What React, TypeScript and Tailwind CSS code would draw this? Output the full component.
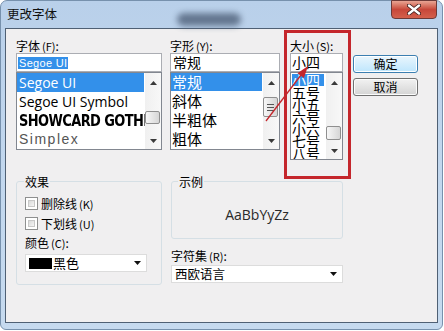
import React from "react";

function UpTri() {
  return (
    <svg width="7" height="4" viewBox="0 0 7 4">
      <polygon points="0,4 7,4 3.5,0" fill="#3a3a3a" />
    </svg>
  );
}
function DownTri() {
  return (
    <svg width="7" height="4" viewBox="0 0 7 4">
      <polygon points="0,0 7,0 3.5,4" fill="#3a3a3a" />
    </svg>
  );
}

function ScrollBar({ thumbTop, thumbH, grip }: { thumbTop: number; thumbH: number; grip?: boolean }) {
  return (
    <div className="w-[16px] h-full bg-gradient-to-r from-[#f0f0f0] to-[#f8f8f8] flex flex-col">
      <div className="h-[16px] flex items-center justify-center pt-[3px]">
        <UpTri />
      </div>
      <div className="flex-1 relative">
        <div
          className="absolute left-[0px] right-[1px] rounded-[2px] border border-[#8f8f8f] bg-gradient-to-r from-[#f7f7f7] to-[#d6d6d6] flex flex-col items-center justify-center gap-[2px]"
          style={{ top: thumbTop, height: thumbH }}
        >
          {grip && (
            <>
              <div className="w-[7px] h-[1px] bg-[#555]" />
              <div className="w-[7px] h-[1px] bg-[#555]" />
              <div className="w-[7px] h-[1px] bg-[#555]" />
            </>
          )}
        </div>
      </div>
      <div className="h-[16px] flex items-center justify-center">
        <DownTri />
      </div>
    </div>
  );
}

function Checkbox() {
  return (
    <div className="w-[13px] h-[13px] border border-[#8e8f8f] bg-white p-[2px]">
      <div className="w-full h-full bg-gradient-to-br from-[#d9d9d9] to-[#f5f5f5] border border-[#c8c8c8]" />
    </div>
  );
}

function ComboArrow() {
  return (
    <svg width="7" height="4" viewBox="0 0 7 4">
      <polygon points="0,0 7,0 3.5,4" fill="#111" />
    </svg>
  );
}

function Label({ main, key2 }: { main: string; key2: string }) {
  return (
    <span className="leading-[13px] whitespace-nowrap">
      {main}
      <span className="ml-[2px] text-[11px]">({key2})</span>
    </span>
  );
}

export default function App() {
  return (
    <div className="w-[444px] h-[331px] bg-white relative overflow-hidden font-['Noto_Sans_CJK_SC',sans-serif] text-[12px] text-black">
      <div className="w-[443px] h-[330px] rounded-t-[7px] rounded-b-[6px] border border-[#7791ad] bg-gradient-to-b from-[#b9d0ea] via-[#c2d7ee] to-[#c6daef] flex flex-col relative">
        {/* title bar */}
        <div className="h-[27px] flex items-start relative">
          <div className="pl-[6px] pt-[6px] text-[12.5px] leading-[14px] text-[#111]">更改字体</div>
          <div className="absolute left-[176px] top-[12px] w-[64px] h-[13px] rounded-full bg-[#4e6079] opacity-80 blur-[3px]" />
          <div className="ml-auto mr-[5px] -mt-[1px] w-[46px] h-[19px] rounded-b-[4px] border border-[#6d3a38] bg-gradient-to-b from-[#e8a493] via-[#c7473a] to-[#d4604c] flex items-center justify-center">
            <svg width="14" height="11" viewBox="0 0 14 11">
              <path d="M2 1.5 L12 9.5 M12 1.5 L2 9.5" stroke="#3a1a18" strokeWidth="4" strokeLinecap="round" />
              <path d="M2 1.5 L12 9.5 M12 1.5 L2 9.5" stroke="#ffffff" strokeWidth="2.4" strokeLinecap="round" />
            </svg>
          </div>
        </div>

        {/* client area */}
        <div className="mx-[4px] h-[295px] border border-[#4f6074] bg-[#f0eff0] pl-[10px] pt-[10px] flex flex-col">
          {/* top row */}
          <div className="flex items-start">
            {/* font */}
            <div className="w-[146px] flex flex-col">
              <div className="h-[14px] leading-[13px]"><Label main="字体" key2="F" />:</div>
              <div className="h-[19px] border border-[#abadb3] bg-white flex items-center pl-[1px]">
                <span className="bg-[#3390ea] text-white font-['Liberation_Sans',sans-serif] text-[11px] leading-[12px] px-[1px] tracking-[0.3px]">Segoe UI</span>
              </div>
              <div className="h-[78px] border border-[#828790] bg-white flex">
                <div className="flex-1 pr-[1px] overflow-hidden">
                  <div className="h-[19px] bg-[#3390ea] text-white font-['Open_Sans',sans-serif] text-[14px] leading-[19px] pl-[2px]">Segoe UI</div>
                  <div className="h-[19px] font-['Open_Sans',sans-serif] text-[14px] leading-[19px] pl-[2px] whitespace-nowrap">Segoe UI Symbol</div>
                  <div className="h-[19px] font-['DejaVu_Sans',sans-serif] font-black text-[13px] leading-[19px] pl-[2px] whitespace-nowrap tracking-[-0.6px] [transform:scaleY(1.15)]">SHOWCARD GOTHIC</div>
                  <div className="h-[19px] font-['Liberation_Sans',sans-serif] font-light text-[#555] text-[14px] leading-[19px] pl-[2px] tracking-[1.5px]">Simplex</div>
                </div>
                <ScrollBar thumbTop={22} thumbH={13} />
              </div>
            </div>

            {/* style */}
            <div className="w-[110px] ml-[8px] flex flex-col">
              <div className="h-[14px] leading-[13px]"><Label main="字形" key2="Y" />:</div>
              <div className="h-[19px] border border-[#abadb3] bg-white text-[14px] leading-[17px] pl-[2px]">常规</div>
              <div className="h-[78px] border border-[#828790] bg-white flex">
                <div className="flex-1 pr-[1px] overflow-hidden text-[15px]">
                  <div className="h-[18px] bg-[#3390ea] text-white leading-[18px] pl-[1px]">常规</div>
                  <div className="h-[19px] leading-[19px] pl-[1px]">斜体</div>
                  <div className="h-[19px] leading-[19px] pl-[1px]">半粗体</div>
                  <div className="h-[19px] leading-[19px] pl-[1px]">粗体</div>
                </div>
                <ScrollBar thumbTop={8} thumbH={20} grip />
              </div>
            </div>

            {/* size */}
            <div className="w-[53px] ml-[10px] flex flex-col">
              <div className="h-[14px] leading-[13px]"><Label main="大小" key2="S" />:</div>
              <div className="h-[19px] border border-[#abadb3] bg-white text-[14px] leading-[17px] pl-[1px]">小四</div>
              <div className="h-[88px] border border-[#828790] bg-white flex">
                <div className="flex-1 overflow-hidden text-[14px] pt-[1px]">
                  <div className="h-[12px] leading-[12px] pl-[1px]">
                    <span className="bg-[#3390ea] text-white inline-block w-[32px] leading-[12px]">小四</span>
                  </div>
                  <div className="h-[12.3px] leading-[12.3px] pl-[1px]">五号</div>
                  <div className="h-[12.3px] leading-[12.3px] pl-[1px]">小五</div>
                  <div className="h-[12.3px] leading-[12.3px] pl-[1px]">六号</div>
                  <div className="h-[12.3px] leading-[12.3px] pl-[1px]">小六</div>
                  <div className="h-[12.3px] leading-[12.3px] pl-[1px]">七号</div>
                  <div className="h-[12.3px] leading-[12.3px] pl-[1px]">八号</div>
                </div>
                <ScrollBar thumbTop={37} thumbH={14} />
              </div>
            </div>

            {/* buttons */}
            <div className="w-[65px] ml-[10px] mt-[16px] flex flex-col gap-[5px]">
              <div className="h-[18px] rounded-[3px] border border-[#3c7fb1] bg-gradient-to-b from-[#eaf6fd] to-[#bee6fd] shadow-[inset_0_0_0_1px_#ffffff] flex items-center justify-center leading-[14px]">确定</div>
              <div className="h-[18px] rounded-[3px] border border-[#707070] bg-gradient-to-b from-[#f2f2f2] to-[#d4d4d4] shadow-[inset_0_0_0_1px_#fbfbfb] flex items-center justify-center leading-[14px]">取消</div>
            </div>
          </div>

          {/* bottom row */}
          <div className="flex items-start mt-[15px]">
            <fieldset className="w-[146px] h-[110px] border border-[#d5dfe5] rounded-[3px] p-0 m-0">
              <legend className="ml-[7px] px-[1px] leading-[13px]">效果</legend>
              <div className="pl-[8px] pt-[9px] flex flex-col">
                <div className="h-[13px] flex items-center gap-[3px]">
                  <Checkbox />
                  <Label main="删除线" key2="K" />
                </div>
                <div className="h-[13px] flex items-center gap-[3px] mt-[7px]">
                  <Checkbox />
                  <Label main="下划线" key2="U" />
                </div>
                <div className="h-[13px] leading-[13px] mt-[6px]"><Label main="颜色" key2="C" />:</div>
                <div className="w-[122px] h-[18px] mt-[5px] border border-[#dcdcdc] bg-white flex items-center pl-[3px] pr-[5px]">
                  <div className="w-[23px] h-[11px] bg-black" />
                  <span className="text-[13px] leading-[14px] ml-[1px]">黑色</span>
                  <div className="ml-auto flex items-center">
                    <ComboArrow />
                  </div>
                </div>
              </div>
            </fieldset>

            <div className="w-[172px] ml-[9px] flex flex-col">
              <fieldset className="h-[64px] border border-[#d5dfe5] rounded-[3px] p-0 m-0 flex flex-col">
                <legend className="ml-[6px] px-[1px] leading-[13px]">示例</legend>
                <div className="h-[50px] flex items-center justify-center pt-[2px] font-['Open_Sans',sans-serif] text-[14px] text-[#2a2a2a]">AaBbYyZz</div>
              </fieldset>
              <div className="h-[13px] leading-[13px] mt-[10px]"><Label main="字符集" key2="R" />:</div>
              <div className="h-[18px] mt-[3px] border border-[#dcdcdc] bg-white flex items-center pl-[3px] pr-[5px]">
                <span className="text-[12.5px] leading-[14px]">西欧语言</span>
                <div className="ml-auto flex items-center">
                  <ComboArrow />
                </div>
              </div>
            </div>
          </div>
        </div>
      </div>

      {/* red annotation overlay */}
      <div className="absolute left-[284px] top-[30px] w-[67px] h-[149px] border-[3px] border-[#c4262c]" />
      <svg className="absolute left-0 top-0" width="444" height="331" viewBox="0 0 444 331">
        <line x1="266" y1="121" x2="301" y2="75" stroke="#c4262c" strokeWidth="1.3" />
        <polygon points="308,66 303.9,78 297.5,73.2" fill="#c4262c" />
      </svg>
    </div>
  );
}
